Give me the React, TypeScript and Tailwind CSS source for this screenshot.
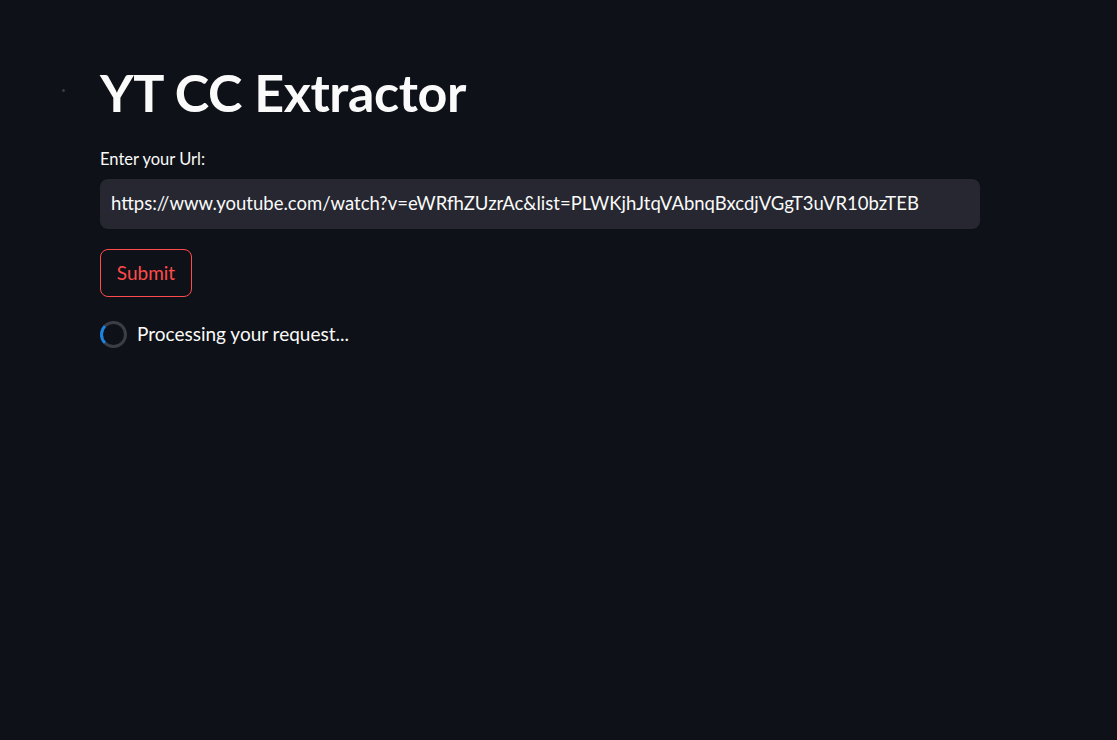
export default function App() {
  return (
    <div
      className="min-h-[740px] w-full bg-[#0e1117] text-[#fafafa]"
      style={{ fontFamily: "Lato, 'Noto Sans', sans-serif" }}
    >
      <div className="relative">
        <span className="absolute left-[62px] top-[89px] h-[3px] w-[3px] rounded-full bg-[#3a3d45]" />
      </div>
      <main className="flex w-[880px] flex-col pl-[100px] pt-[61px]">
        <h1 className="text-[52px] font-bold leading-[62px] tracking-[-0.4px]">YT CC Extractor</h1>

        <label className="mt-[25px] text-[16.5px] leading-[22px]">Enter your Url:</label>
        <div className="mt-[9px] flex h-[50px] w-[880px] items-center rounded-lg bg-[#262730] px-[11px] text-[18.5px]">
          https://www.youtube.com/watch?v=eWRfhZUzrAc&amp;list=PLWKjhJtqVAbnqBxcdjVGgT3uVR10bzTEB
        </div>

        <button className="mt-[20px] h-[48px] w-[92px] rounded-lg border border-[#ff4b4b] bg-transparent text-[19px] text-[#ff4b4b]">
          Submit
        </button>

        <div className="mt-[23px] flex items-center gap-[10px]">
          <div className="h-[27px] w-[27px] rounded-full border-[3px] border-[#3b3e45] border-l-[#1c83e1]" />
          <span className="text-[19px]">Processing your request...</span>
        </div>
      </main>
    </div>
  );
}
